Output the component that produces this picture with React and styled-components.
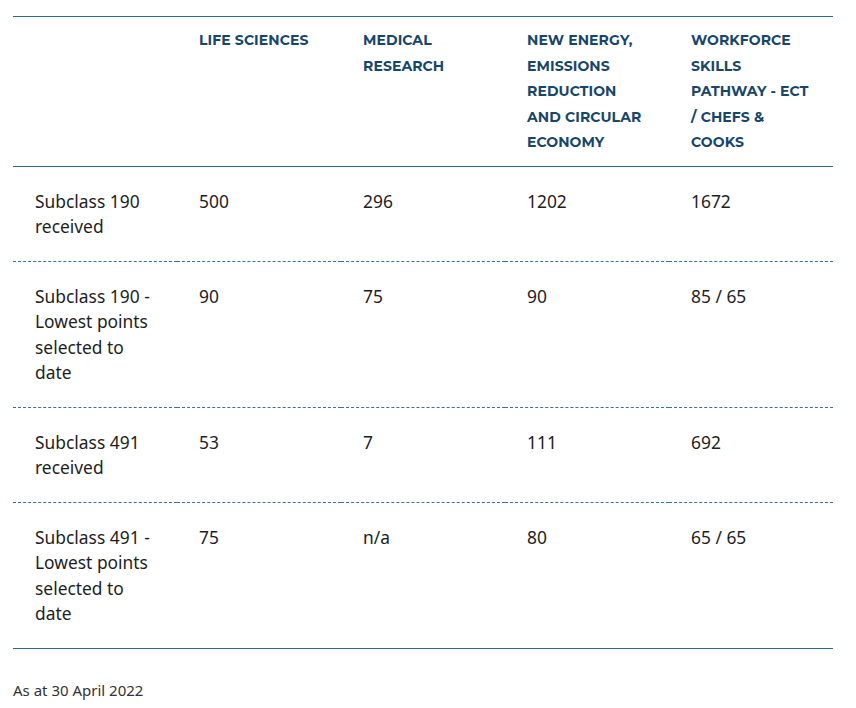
import React from 'react'
import styled, { createGlobalStyle } from 'styled-components'

const Global = createGlobalStyle`
  body {
    margin: 0;
    background: #fff;
    font-family: 'Noto Sans', 'Lato', sans-serif;
    color: #1e1e1e;
  }
  * {
    box-sizing: border-box;
  }
`

const Page = styled.div`
  padding: 16px 23px 0 13px;
`

const Table = styled.table`
  width: 820px;
  border-collapse: collapse;
  table-layout: fixed;
  border-top: 1.5px solid #2c6b8b;
  border-bottom: 1.5px solid #2c6b8b;
`

const Head = styled.th`
  width: 164px;
  text-align: left;
  vertical-align: top;
  padding: 11px 22px 10px;
  font-family: 'Montserrat', 'Lato', sans-serif;
  font-weight: 700;
  font-size: 14px;
  line-height: 25.5px;
  letter-spacing: 0.1px;
  color: #17466a;
  text-transform: uppercase;
  border-bottom: 1.5px solid #2c6b8b;
`

const Cell = styled.td`
  text-align: left;
  vertical-align: top;
  padding: 22px 22px 21px;
  font-size: 17.4px;
  line-height: 25.5px;
  color: #1e1e1e;
  border-bottom: ${p => (p.$last ? 'none' : '1px dashed #3a7491')};
`

const Note = styled.p`
  margin: 31px 0 0;
  font-size: 15px;
  color: #333;
`

const columns = [
  'Life Sciences',
  'Medical Research',
  'New Energy, Emissions Reduction and Circular Economy',
  'Workforce Skills Pathway - ECT / Chefs & Cooks'
]

const rows = [
  ['Subclass 190 received', '500', '296', '1202', '1672'],
  ['Subclass 190 - Lowest points selected to date', '90', '75', '90', '85 / 65'],
  ['Subclass 491 received', '53', '7', '111', '692'],
  ['Subclass 491 - Lowest points selected to date', '75', 'n/a', '80', '65 / 65']
]

export default function App() {
  return (
    <Page>
      <Global />
      <Table>
        <thead>
          <tr>
            <Head />
            {columns.map(c => (
              <Head key={c}>{c}</Head>
            ))}
          </tr>
        </thead>
        <tbody>
          {rows.map((r, i) => (
            <tr key={i}>
              {r.map((v, j) => (
                <Cell key={j} $last={i === rows.length - 1}>
                  {v}
                </Cell>
              ))}
            </tr>
          ))}
        </tbody>
      </Table>
      <Note>As at 30 April 2022</Note>
    </Page>
  )
}
